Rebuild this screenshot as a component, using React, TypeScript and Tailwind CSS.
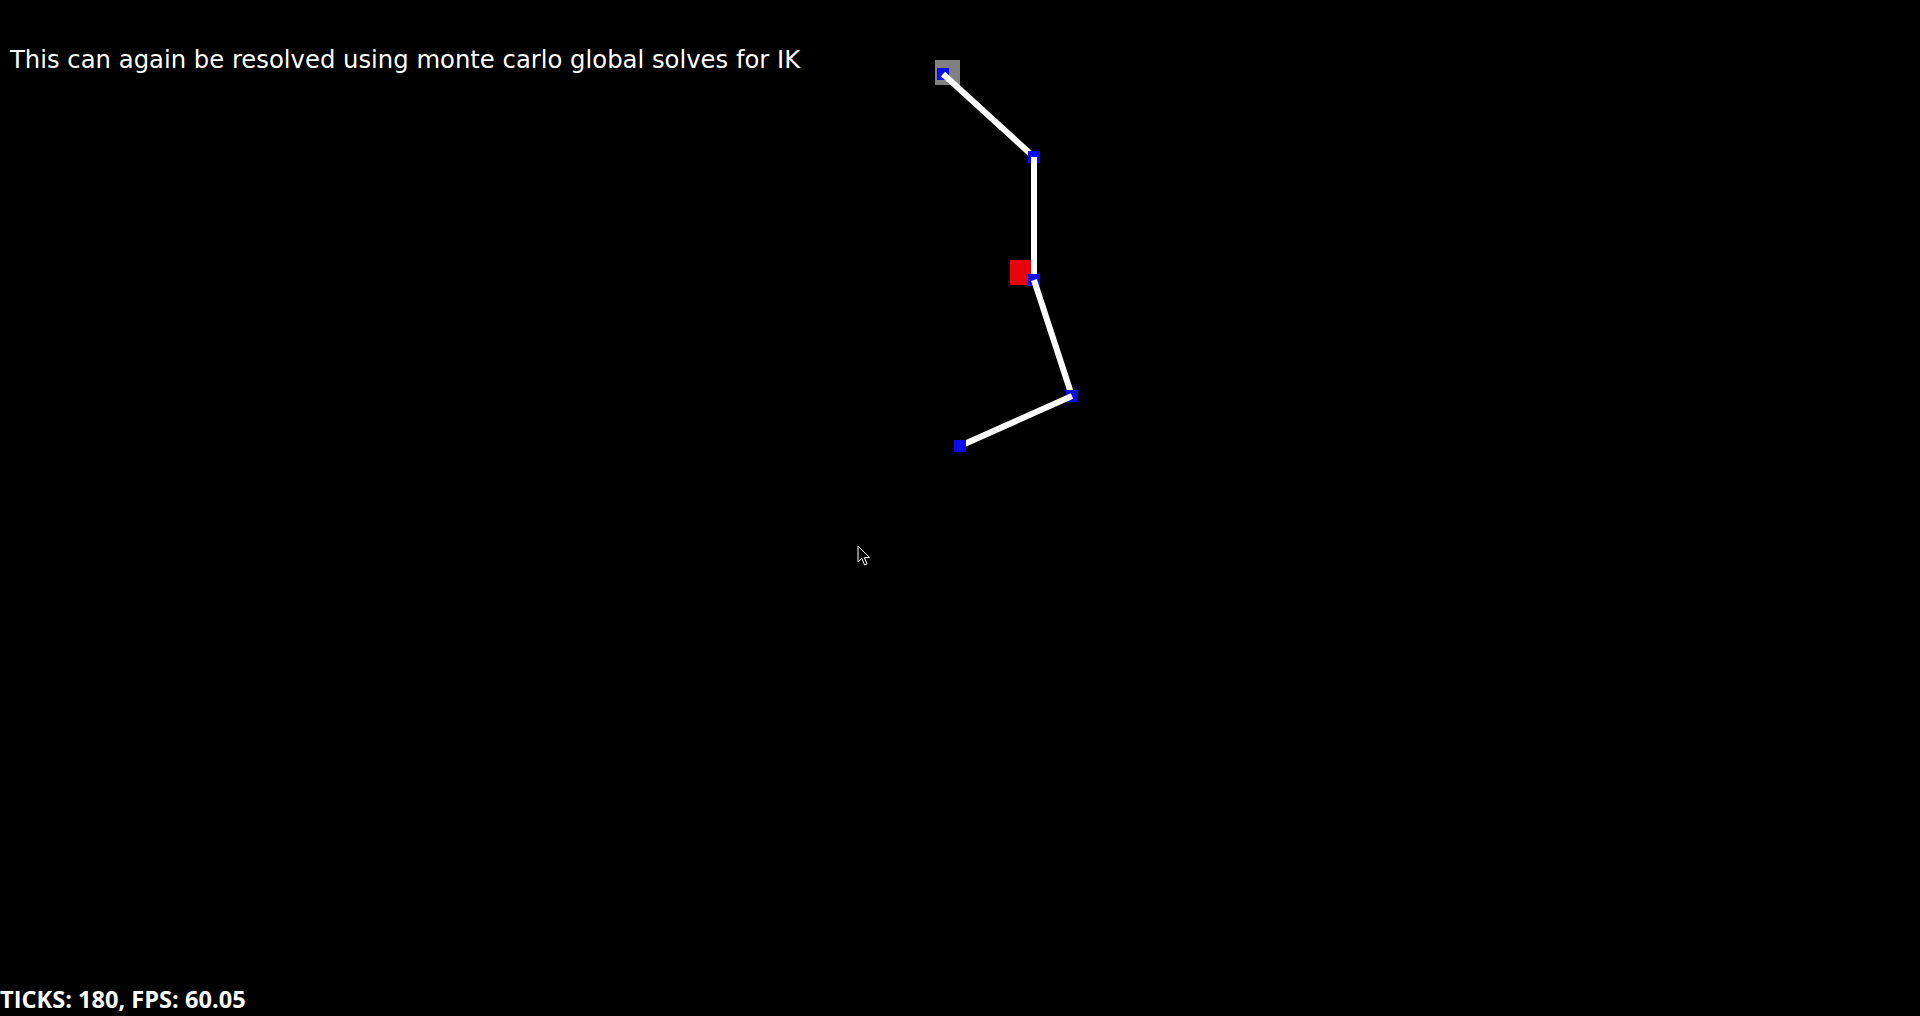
import React from 'react'

const joints = [
  { x: 943, y: 74 },
  { x: 1034, y: 157 },
  { x: 1034, y: 280 },
  { x: 1072, y: 396 },
  { x: 960, y: 446 },
]

const Chain = () => {
  return (
    <svg className="absolute inset-0" width="1920" height="1016">
      {/* base */}
      <rect x="935" y="60" width="25" height="25" fill="#808080" />
      {/* target */}
      <rect x="1010" y="260" width="25" height="25" fill="#e8000b" />
      {/* joint, then the bone leaving it */}
      {joints.map((j, i) => {
        const next = joints[i + 1]
        return (
          <g key={i}>
            <rect x={j.x - 6} y={j.y - 6} width="12" height="12" fill="#0a0aeb" />
            {next && (
              <line x1={j.x} y1={j.y} x2={next.x} y2={next.y} stroke="#ffffff" strokeWidth="6" />
            )}
          </g>
        )
      })}
    </svg>
  )
}

const Cursor = () => {
  return (
    <svg className="absolute left-[857px] top-[545px]" width="14" height="22" viewBox="0 0 14 22">
      <path
        d="M1 1 L1 17 L4.8 13.4 L7.6 20 L10 19 L7.3 12.6 L12.5 12.6 Z"
        fill="#000000"
        stroke="#ffffff"
        strokeWidth="1"
        strokeLinejoin="miter"
      />
    </svg>
  )
}

export default function App() {
  return (
    <div className="relative flex h-[1016px] w-full flex-col justify-between overflow-hidden bg-black">
      {/* TOP MESSAGE */}
      <p className="relative pl-[10px] pt-[48px] font-['DejaVu_Sans',sans-serif] text-[24.3px] leading-none text-white">
        This can again be resolved using monte carlo global solves for IK
      </p>

      <Chain />
      <Cursor />

      {/* STATS */}
      <p className="relative pb-1 font-['Open_Sans',sans-serif] text-[23.6px] font-bold leading-none text-white">
        TICKS: 180, FPS: 60.05
      </p>
    </div>
  )
}
